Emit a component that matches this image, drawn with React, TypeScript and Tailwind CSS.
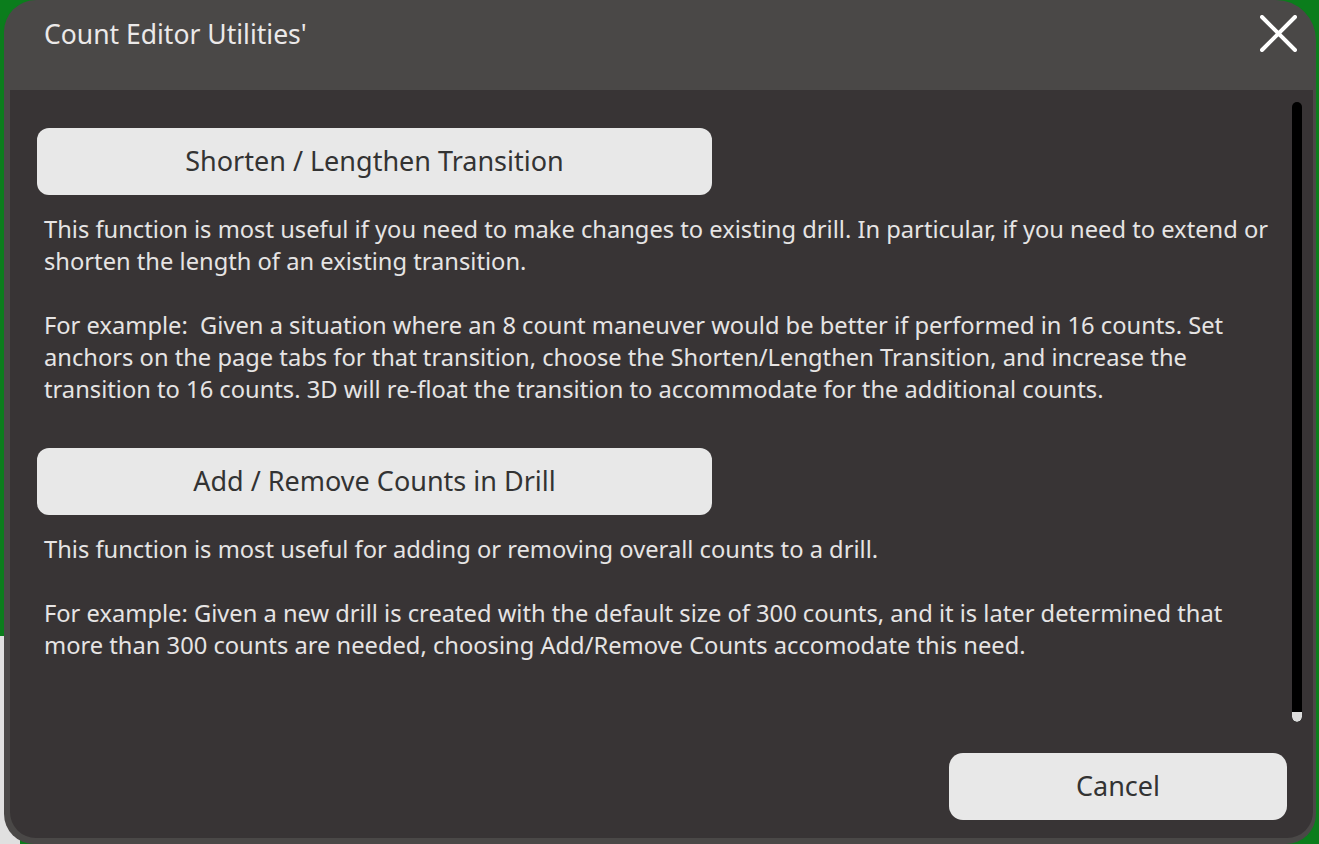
import React from 'react'

const font = { fontFamily: '"Noto Sans", "Open Sans", sans-serif' }

function ActionButton({ label }: { label: string }) {
  return (
    <button className="w-[675px] h-[67px] rounded-[12px] bg-[#e8e8e8] text-[#333333] text-[27px] flex items-center justify-center">
      {label}
    </button>
  )
}

function Paragraphs({ items }: { items: string[] }) {
  return (
    <div className="pl-[7px] pr-[36px] mt-[18px] text-[23.7px] leading-[32px] text-[#e6e4e4] flex flex-col gap-[32px]">
      {items.map((t, i) => (
        <p key={i} className="whitespace-pre-wrap">{t}</p>
      ))}
    </div>
  )
}

export default function App() {
  return (
    <div className="relative w-[1319px] h-[844px] overflow-hidden bg-[#0b7d1c]" style={font}>
      {/* grey strip bottom-left, behind the dialog */}
      <div className="absolute left-0 top-[636px] w-[20px] h-[208px] bg-[#e0e0e0]" />

      <div className="relative ml-[4px] w-[1312px] h-[844px] rounded-tl-[32px] rounded-tr-[40px] rounded-bl-[30px] rounded-br-[30px] bg-[#4a4847] flex flex-col">
        {/* Header */}
        <div className="h-[90px] flex items-start justify-between pl-[40px] pr-[19px]">
          <h1 className="mt-[18px] text-[26.5px] leading-[32px] text-[#ebe9e9]">Count Editor Utilities'</h1>
          <button className="mt-[15px] w-[37px] h-[37px] text-white" aria-label="Close">
            <svg viewBox="0 0 37 37" className="w-[37px] h-[37px]" fill="none" stroke="currentColor" strokeWidth={4} strokeLinecap="round">
              <path d="M2 2L35 35M35 2L2 35" />
            </svg>
          </button>
        </div>

        {/* Body */}
        <div className="flex-1 ml-[6px] mr-[3px] mb-[6px] rounded-bl-[26px] rounded-br-[26px] bg-[#383435] flex flex-col">
          <div className="relative flex-1 pl-[27px] pt-[38px]">
            <ActionButton label="Shorten / Lengthen Transition" />
            <Paragraphs
              items={[
                'This function is most useful if you need to make changes to existing drill. In particular, if you need to extend or shorten the length of an existing transition.',
                'For example:  Given a situation where an 8 count maneuver would be better if performed in 16 counts. Set anchors on the page tabs for that transition, choose the Shorten/Lengthen Transition, and increase the transition to 16 counts. 3D will re-float the transition to accommodate for the additional counts.',
              ]}
            />
            <div className="mt-[43px]">
              <ActionButton label="Add / Remove Counts in Drill" />
            </div>
            <Paragraphs
              items={[
                'This function is most useful for adding or removing overall counts to a drill.',
                'For example: Given a new drill is created with the default size of 300 counts, and it is later determined that more than 300 counts are needed, choosing Add/Remove Counts accomodate this need.',
              ]}
            />

            {/* scrollbar */}
            <div className="absolute left-[1282px] top-[12px] w-[10px] h-[620px] rounded-full bg-black overflow-hidden flex flex-col justify-end">
              <div className="h-[10px] bg-[#dcdcdc] rounded-b-full" />
            </div>
          </div>

          <div className="flex justify-end pr-[26px] pb-[18px]">
            <button className="w-[338px] h-[67px] rounded-[14px] bg-[#e8e8e8] text-[#333333] text-[27px] flex items-center justify-center">
              Cancel
            </button>
          </div>
        </div>
      </div>
    </div>
  )
}
